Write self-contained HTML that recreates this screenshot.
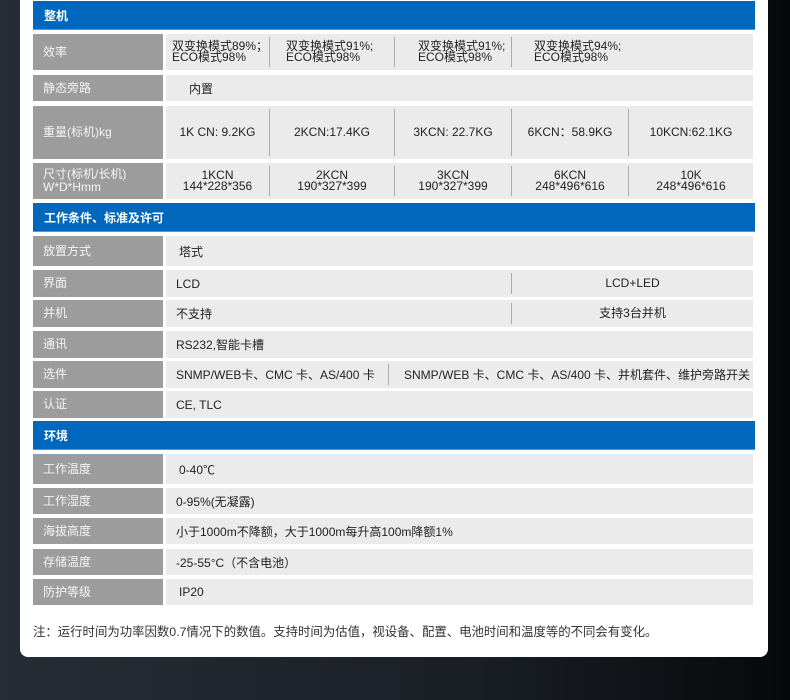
<!DOCTYPE html>
<html><head><meta charset="utf-8"><style>
*{margin:0;padding:0;box-sizing:border-box}
body{width:790px;height:700px;overflow:hidden;background:linear-gradient(90deg,#262d36 0%,#1a1f26 60%,#07080a 100%);font-family:"Liberation Sans","Noto Sans CJK SC",sans-serif;position:relative}
.card{position:absolute;left:20px;top:-10px;width:748px;height:667px;background:#fff;border-radius:8px}
.h{position:absolute;left:33px;width:722px;background:#0068bc;color:#fff;font-size:12px;font-weight:bold;padding-left:11px;display:flex;align-items:center;border-bottom:1px solid #4b9be0}
.l{position:absolute;left:33px;width:130px;background:#9c9c9c;color:#f4f4f4;font-size:12px;padding-left:10px;display:flex;align-items:center;line-height:13px}
.v{position:absolute;left:166px;width:587px;background:#ebebeb;font-size:12px;color:#222}
.c{position:absolute;top:0;bottom:0;display:flex;align-items:center;justify-content:center;text-align:center;line-height:11px;font-size:12px}
.d{position:absolute;top:3px;bottom:3px;width:1px;background:#aaa}
.t{position:absolute;top:0;bottom:0;display:flex;align-items:center;left:10px}
</style></head><body>
<div class="card"></div>

<div class="h" style="top:1px;height:29px">整机</div>

<div class="l" style="top:34px;height:36px">效率</div>
<div class="v" style="top:34px;height:36px">
<div class="c" style="left:6px;width:100px;justify-content:flex-start;text-align:left">双变换模式89%；<br>ECO模式98%</div>
<div class="d" style="left:103px"></div>
<div class="c" style="left:120px;width:110px;justify-content:flex-start;text-align:left">双变换模式91%;<br>ECO模式98%</div>
<div class="d" style="left:228px"></div>
<div class="c" style="left:252px;width:100px;justify-content:flex-start;text-align:left">双变换模式91%;<br>ECO模式98%</div>
<div class="d" style="left:345px"></div>
<div class="c" style="left:368px;width:110px;justify-content:flex-start;text-align:left">双变换模式94%;<br>ECO模式98%</div>
</div>

<div class="l" style="top:75px;height:26px">静态旁路</div>
<div class="v" style="top:75px;height:26px"><div class="t" style="left:23px">内置</div></div>

<div class="l" style="top:106px;height:53px">重量(标机)kg</div>
<div class="v" style="top:106px;height:53px">
<div class="c" style="left:0;width:103px">1K CN: 9.2KG</div><div class="d" style="left:103px"></div>
<div class="c" style="left:104px;width:124px">2KCN:17.4KG</div><div class="d" style="left:228px"></div>
<div class="c" style="left:229px;width:116px">3KCN: 22.7KG</div><div class="d" style="left:345px"></div>
<div class="c" style="left:346px;width:116px">6KCN：58.9KG</div><div class="d" style="left:462px"></div>
<div class="c" style="left:463px;width:124px">10KCN:62.1KG</div>
</div>

<div class="l" style="top:163px;height:36px">尺寸(标机/长机)<br>W*D*Hmm</div>
<div class="v" style="top:163px;height:36px">
<div class="c" style="left:0;width:103px">1KCN<br>144*228*356</div><div class="d" style="left:103px"></div>
<div class="c" style="left:104px;width:124px">2KCN<br>190*327*399</div><div class="d" style="left:228px"></div>
<div class="c" style="left:229px;width:116px">3KCN<br>190*327*399</div><div class="d" style="left:345px"></div>
<div class="c" style="left:346px;width:116px">6KCN<br>248*496*616</div><div class="d" style="left:462px"></div>
<div class="c" style="left:463px;width:124px">10K<br>248*496*616</div>
</div>

<div class="h" style="top:203px;height:29px">工作条件、标准及许可</div>

<div class="l" style="top:236px;height:30px">放置方式</div>
<div class="v" style="top:236px;height:30px"><div class="t" style="left:13px">塔式</div></div>

<div class="l" style="top:270px;height:27px">界面</div>
<div class="v" style="top:270px;height:27px"><div class="t">LCD</div><div class="d" style="left:345px"></div><div class="c" style="left:346px;width:241px">LCD+LED</div></div>

<div class="l" style="top:300px;height:27px">并机</div>
<div class="v" style="top:300px;height:27px"><div class="t">不支持</div><div class="d" style="left:345px"></div><div class="c" style="left:346px;width:241px">支持3台并机</div></div>

<div class="l" style="top:331px;height:27px">通讯</div>
<div class="v" style="top:331px;height:27px"><div class="t">RS232,智能卡槽</div></div>

<div class="l" style="top:361px;height:27px">选件</div>
<div class="v" style="top:361px;height:27px"><div class="t">SNMP/WEB卡、CMC 卡、AS/400 卡</div><div class="d" style="left:222px"></div><div class="t" style="left:238px">SNMP/WEB 卡、CMC 卡、AS/400 卡、并机套件、维护旁路开关</div></div>

<div class="l" style="top:391px;height:27px">认证</div>
<div class="v" style="top:391px;height:27px"><div class="t">CE, TLC</div></div>

<div class="h" style="top:421px;height:29px">环境</div>

<div class="l" style="top:454px;height:30px">工作温度</div>
<div class="v" style="top:454px;height:30px"><div class="t" style="left:13px">0-40℃</div></div>
<div class="l" style="top:488px;height:26px">工作湿度</div>
<div class="v" style="top:488px;height:26px"><div class="t">0-95%(无凝露)</div></div>
<div class="l" style="top:518px;height:26px">海拔高度</div>
<div class="v" style="top:518px;height:26px"><div class="t">小于1000m不降额，大于1000m每升高100m降额1%</div></div>
<div class="l" style="top:549px;height:26px">存储温度</div>
<div class="v" style="top:549px;height:26px"><div class="t">-25-55°C（不含电池）</div></div>
<div class="l" style="top:579px;height:26px">防护等级</div>
<div class="v" style="top:579px;height:26px"><div class="t" style="left:13px">IP20</div></div>

<div style="position:absolute;left:33px;top:622px;font-size:12.4px;color:#333">注：运行时间为功率因数0.7情况下的数值。支持时间为估值，视设备、配置、电池时间和温度等的不同会有变化。</div>
</body></html>
